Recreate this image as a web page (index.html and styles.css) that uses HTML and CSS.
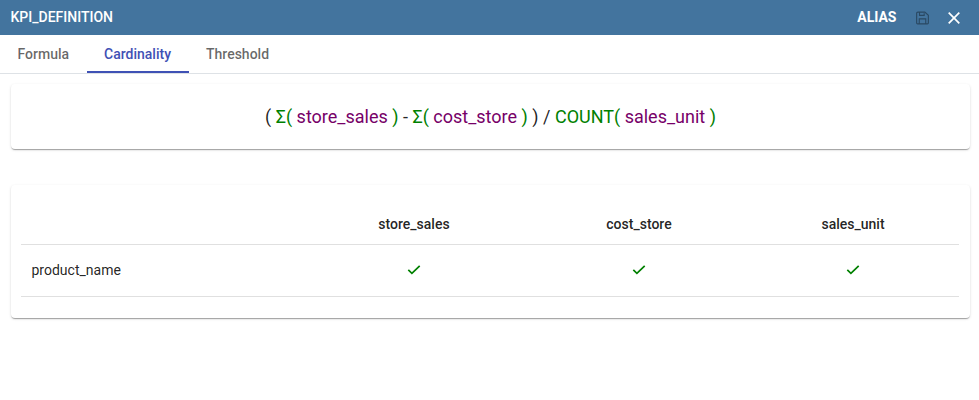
FILE: index.html
```html
<!DOCTYPE html>
<html lang="en">
<head>
<meta charset="utf-8">
<title>KPI_DEFINITION</title>
<link rel="stylesheet" href="styles.css">
</head>
<body>
<header class="toolbar">
  <span class="title">KPI_DEFINITION</span>
  <span class="alias">ALIAS</span>
  <svg class="save" viewBox="0 0 14 14" aria-label="Save"><path d="M2 .7h7.5L13.3 4v8.3a1 1 0 0 1-1 1H1.7a1 1 0 0 1-1-1V2A1.3 1.3 0 0 1 2 .7zM3.5 13V8h7v5M3.8 1v3.2h5V2"/></svg>
  <svg class="close" viewBox="0 0 12 12" aria-label="Close"><path d="M.7.7l10.6 10.6M11.3.7L.7 11.3"/></svg>
</header>
<nav class="tabs">
  <a class="tab">Formula</a>
  <a class="tab active">Cardinality</a>
  <a class="tab">Threshold</a>
</nav>
<main>
  <section class="card formula">
    <p>( <span class="fn">Σ(</span> <span class="measure">store_sales</span> <span class="fn">)</span> - <span class="fn">Σ(</span> <span class="measure">cost_store</span> <span class="fn">)</span> ) / <span class="fn">COUNT(</span> <span class="measure">sales_unit</span> <span class="fn">)</span></p>
  </section>
  <section class="card grid">
    <table>
      <colgroup><col class="c0"><col class="c1"><col class="c2"><col class="c3"></colgroup>
      <thead><tr><th></th><th>store_sales</th><th>cost_store</th><th>sales_unit</th></tr></thead>
      <tbody><tr>
        <td class="name">product_name</td>
        <td><svg class="check" viewBox="0 0 14 10"><path d="M1.3 4.9l3.6 3.5L12.7.8"/></svg></td>
        <td><svg class="check" viewBox="0 0 14 10"><path d="M1.3 4.9l3.6 3.5L12.7.8"/></svg></td>
        <td><svg class="check" viewBox="0 0 14 10"><path d="M1.3 4.9l3.6 3.5L12.7.8"/></svg></td>
      </tr></tbody>
    </table>
  </section>
</main>
</body>
</html>
```
FILE: styles.css
```css
* { box-sizing: border-box; }
body { margin: 0; min-height: 100vh; background: #fff; color: rgba(0,0,0,.87); font: 14px Roboto, sans-serif; }
.toolbar { display: flex; align-items: center; height: 35px; padding: 0 19px 0 10.5px; background: #43749e; color: #fff; }
.title, .alias { line-height: 16px; padding-bottom: 2px; }
.title { flex: 1; font-weight: 500; }
.alias { font-weight: 700; margin-right: 19px; }
.toolbar svg { fill: none; stroke: #fff; }
.toolbar .save { width: 13px; height: 14px; margin-right: 19.5px; stroke: rgba(0,0,0,.38); stroke-width: 1.2; }
.close { width: 12px; height: 12px; stroke-width: 1.7; }
.tabs { display: flex; height: 39px; border-bottom: 1px solid #dee2e6; }
.tab { height: 38px; padding: 0 17.5px; line-height: 38px; font-weight: 500; color: rgba(0,0,0,.6); }
.tab.active { color: #3f51b5; border-bottom: 2px solid #3f51b5; }
main { padding: 10px 9px 20px 11px; }
.card { border-radius: 4px; background: #fff; box-shadow: 0 2px 1px -1px rgba(0,0,0,.2), 0 1px 1px rgba(0,0,0,.14), 0 1px 3px rgba(0,0,0,.12); }
.formula { height: 65px; margin-bottom: 36px; text-align: center; }
.formula p { margin: 0; line-height: 65px; font-size: 18px; }
.fn { color: green; }
.measure { color: #770068; }
.grid { height: 133px; padding: 19px 11px 0 10px; }
table { width: 100%; table-layout: fixed; border-collapse: collapse; }
.c0 { width: 282px; }
.c1 { width: 222px; }
.c2 { width: 228px; }
th { height: 40px; padding: 0; font-weight: 500; border-bottom: 1px solid #e0e0e0; }
td { height: 52px; padding: 0; text-align: center; border-bottom: 1px solid #e0e0e0; }
th:last-child, td:last-child { padding-right: 6px; }
td.name { padding-left: 10.5px; text-align: left; }
.check { display: block; width: 14px; height: 10px; margin: 0 auto; fill: none; stroke: green; stroke-width: 1.7; }
```
